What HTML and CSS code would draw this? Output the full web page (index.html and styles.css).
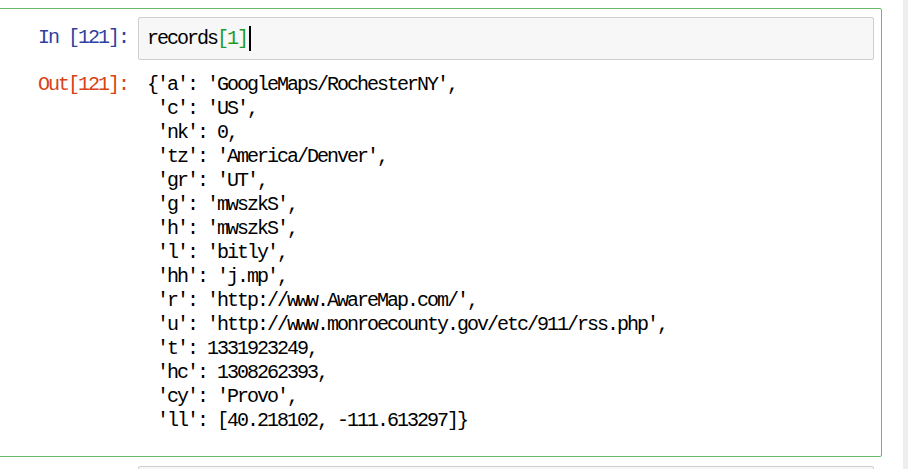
FILE: index.html
```html
<!DOCTYPE html>
<html>
<head>
<meta charset="utf-8">
<link rel="stylesheet" href="styles.css">
</head>
<body>
<div class="page">
  <div class="notebook">
    <div class="cell selected">
      <div class="row">
        <div class="prompt in-prompt">In [121]:</div>
        <div class="input-area"><span class="code">records<span class="num">[1]</span></span><span class="cursor"></span></div>
      </div>
      <div class="row out-row">
        <div class="prompt out-prompt">Out[121]:</div>
        <pre class="output">{'a': 'GoogleMaps/RochesterNY',
 'c': 'US',
 'nk': 0,
 'tz': 'America/Denver',
 'gr': 'UT',
 'g': 'mwszkS',
 'h': 'mwszkS',
 'l': 'bitly',
 'hh': 'j.mp',
 'r': 'http://www.AwareMap.com/',
 'u': 'http://www.monroecounty.gov/etc/911/rss.php',
 't': 1331923249,
 'hc': 1308262393,
 'cy': 'Provo',
 'll': [40.218102, -111.613297]}</pre>
      </div>
    </div>
    <div class="cell">
      <div class="row">
        <div class="prompt in-prompt"></div>
        <div class="input-area empty"></div>
      </div>
    </div>
  </div>
  <div class="side"></div>
</div>
</body>
</html>
```
FILE: styles.css
```css
html, body {
  margin: 0;
  padding: 0;
  background: #ffffff;
  overflow: hidden;
}
.page {
  display: flex;
  width: 908px;
  height: 469px;
  overflow: hidden;
}
.notebook {
  width: 903px;
  flex: none;
  background: #ffffff;
  padding-top: 8px;
}
.side {
  flex: 1;
  background: #eeeeee;
}
.cell {
  margin-left: -20px;
  width: 902px;
  box-sizing: border-box;
  border: 1px solid transparent;
  padding: 8px 7px 23px 0;
}
.cell.selected {
  border-color: #66bb6a;
  border-radius: 2px;
}
.row {
  display: grid;
  grid-template-columns: 157px 1fr;
}
.out-row {
  margin-top: 13px;
}
.prompt, .code, .output {
  font-family: "Liberation Mono", monospace;
  font-size: 20px;
  line-height: 24px;
  letter-spacing: -2px;
}
.prompt {
  text-align: right;
  padding-right: 10px;
  white-space: pre;
}
.in-prompt {
  color: #303f9f;
  padding-top: 9px;
}
.out-prompt {
  color: #d84315;
}
.input-area {
  border: 1px solid #cfcfcf;
  border-radius: 2px;
  background: #f7f7f7;
  padding: 8px 8px;
  display: flex;
  align-items: center;
}
.input-area.empty {
  height: 24px;
}
.code {
  color: #000;
}
.num {
  color: #1f9a2a;
}
.cursor {
  display: inline-block;
  width: 2px;
  height: 25px;
  background: #000;
  margin-left: 2px;
}
.output {
  margin: 0;
  padding-left: 9px;
  color: #000;
}
```
